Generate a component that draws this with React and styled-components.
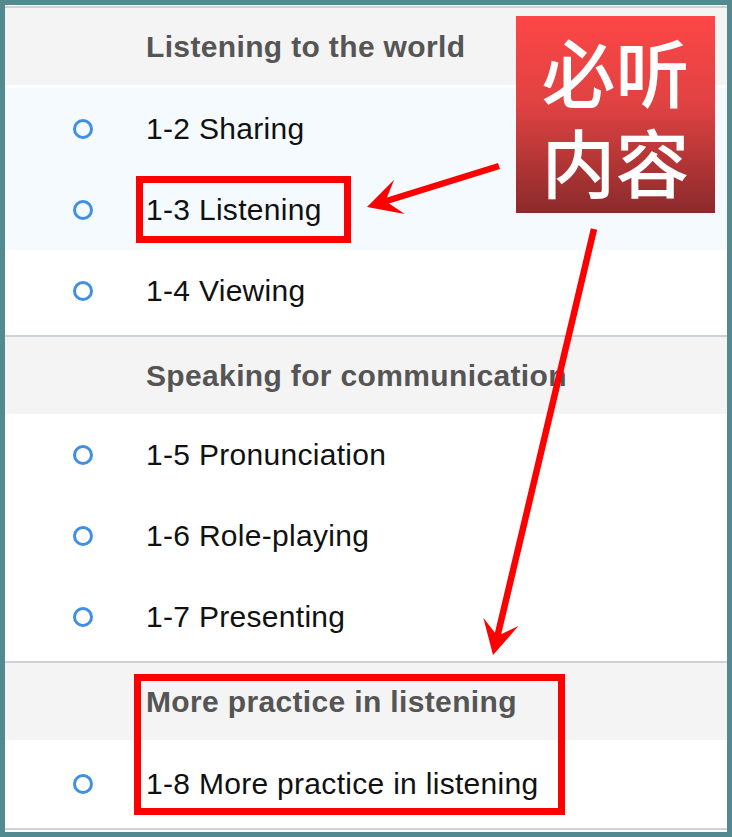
import React from 'react'
import styled, { createGlobalStyle } from 'styled-components'

const GlobalStyle = createGlobalStyle`
  html, body {
    margin: 0;
    padding: 0;
    background: #ffffff;
  }
  * {
    box-sizing: border-box;
  }
`

const sections = [
  {
    title: 'Listening to the world',
    gap: 3,
    items: [
      { label: '1-2 Sharing', active: true },
      { label: '1-3 Listening', active: true, marked: true },
      { label: '1-4 Viewing' },
    ],
  },
  {
    title: 'Speaking for communication',
    gap: 0,
    items: [
      { label: '1-5 Pronunciation' },
      { label: '1-6 Role-playing' },
      { label: '1-7 Presenting' },
    ],
  },
  {
    title: 'More practice in listening',
    gap: 3,
    items: [{ label: '1-8 More practice in listening' }],
  },
]

// swept arrow head, coordinates in page pixels
const arrowPoints = (sx, sy, tx, ty, shaft = 6.5, headLen = 34, headW = 18, join = 22) => {
  const dx = tx - sx
  const dy = ty - sy
  const len = Math.hypot(dx, dy)
  const ux = dx / len
  const uy = dy / len
  const nx = -uy
  const ny = ux
  const h = shaft / 2
  const jx = tx - ux * join
  const jy = ty - uy * join
  const bx = tx - ux * headLen
  const by = ty - uy * headLen
  const pts = [
    [sx + nx * h, sy + ny * h],
    [jx + nx * h, jy + ny * h],
    [bx + nx * headW, by + ny * headW],
    [tx, ty],
    [bx - nx * headW, by - ny * headW],
    [jx - nx * h, jy - ny * h],
    [sx - nx * h, sy - ny * h],
  ]
  return pts.map(p => p.map(v => v.toFixed(1)).join(',')).join(' ')
}

const App = () => {
  return (
    <>
      <GlobalStyle />
      <Frame>
        {sections.map((section, i) => (
          <Section key={section.title} last={i === sections.length - 1}>
            <SectionHeader>{section.title}</SectionHeader>
            <RowList gap={section.gap}>
              {section.items.map(item => (
                <Row key={item.label} active={item.active}>
                  <Ring />
                  <RowLabel marked={item.marked}>{item.label}</RowLabel>
                </Row>
              ))}
            </RowList>
          </Section>
        ))}

        <Callout>
          <CalloutLine>必听</CalloutLine>
          <CalloutLine>内容</CalloutLine>
        </Callout>
        <GroupMark />
        <Arrows viewBox="0 0 732 837">
          <polygon points={arrowPoints(499, 166, 367, 207)} />
          <polygon points={arrowPoints(594, 229, 493, 655)} />
        </Arrows>
      </Frame>
    </>
  )
}

const Frame = styled.div`
  position: relative;
  width: 732px;
  height: 837px;
  border: 5px solid #538a8f;
  padding: 1px 0 2px 0;
  background: #ffffff;
  font-family: 'Liberation Sans', Arial, sans-serif;
`

const Section = styled.section`
  border-top: 2px solid #cdd1d8;
  border-bottom: ${p => (p.last ? '2px solid #cdd1d8' : 'none')};
`

const SectionHeader = styled.h2`
  margin: 0;
  height: 77px;
  display: flex;
  align-items: center;
  padding-left: 141px;
  background: #f4f4f4;
  font-size: 30px;
  font-weight: 700;
  letter-spacing: 0.35px;
  color: #555555;
`

const RowList = styled.ul`
  list-style: none;
  margin: 0;
  padding: ${p => p.gap}px 0 4px 0;
`

const Row = styled.li`
  height: 81px;
  display: flex;
  align-items: center;
  padding-left: 68px;
  gap: 53px;
  background: ${p => (p.active ? '#f5faff' : '#ffffff')};
`

const Ring = styled.span`
  width: 20px;
  height: 20px;
  flex: none;
  border: 3px solid #3f8fe5;
  border-radius: 50%;
`

const RowLabel = styled.span`
  font-size: 30px;
  letter-spacing: 0.3px;
  color: #111111;
  ${p =>
    p.marked &&
    `
    line-height: 53px;
    padding: 0 22px 0 3px;
    margin-left: -10px;
    border: 7px solid #ff0000;
  `}
`

const Callout = styled.div`
  position: absolute;
  left: 511px;
  top: 11px;
  width: 199px;
  height: 197px;
  display: flex;
  flex-direction: column;
  align-items: center;
  justify-content: center;
  background: linear-gradient(180deg, #fd4646 0%, #e04242 45%, #8b2a2b 100%);
  color: #ffffff;
  font-family: 'Noto Sans CJK SC', sans-serif;
  font-size: 74px;
  font-weight: 500;
`

const CalloutLine = styled.span`
  display: block;
  height: 90px;
  line-height: 90px;
`

const GroupMark = styled.div`
  position: absolute;
  left: 129px;
  top: 669px;
  width: 431px;
  height: 141px;
  border: 7px solid #ff0000;
`

const Arrows = styled.svg`
  position: absolute;
  left: -5px;
  top: -5px;
  width: 732px;
  height: 837px;
  fill: #ff0000;
  pointer-events: none;
`

export default App
